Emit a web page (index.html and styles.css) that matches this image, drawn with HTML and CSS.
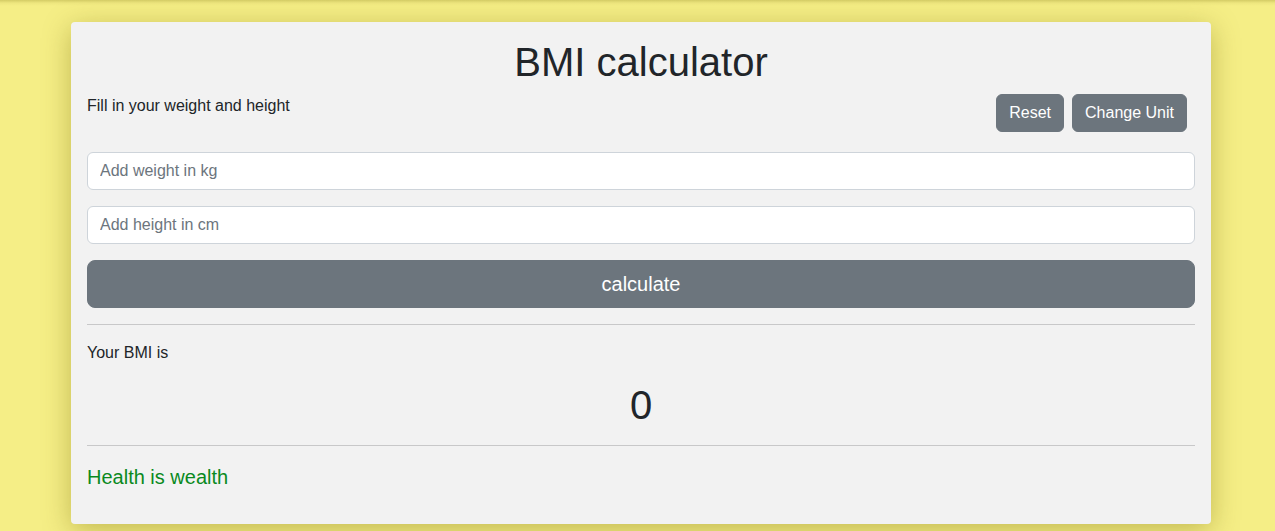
FILE: index.html
```html
<!DOCTYPE html>
<html lang="en">
<head>
<meta charset="utf-8">
<title>BMI calculator</title>
<link rel="stylesheet" href="styles.css">
</head>
<body>
<div class="topshade"></div>
<main class="card">
  <h1 class="title">BMI calculator</h1>
  <div class="toprow">
    <p class="hint">Fill in your weight and height</p>
    <div class="actions">
      <button class="btn">Reset</button>
      <button class="btn">Change Unit</button>
    </div>
  </div>
  <input class="field" type="text" placeholder="Add weight in kg">
  <input class="field" type="text" placeholder="Add height in cm">
  <button class="btn btn-lg">calculate</button>
  <hr class="rule">
  <p class="label">Your BMI is</p>
  <h1 class="value">0</h1>
  <hr class="rule">
  <p class="motto">Health is wealth</p>
</main>
</body>
</html>
```

FILE: styles.css
```css
* { box-sizing: border-box; }
html, body { margin: 0; padding: 0; }
body {
  background: #f5ee86;
  font-family: "Liberation Sans", Arial, sans-serif;
  color: #212529;
  font-size: 16px;
  line-height: 1.5;
  min-height: 531px;
  overflow: hidden;
}
.topshade {
  height: 22px;
  background: linear-gradient(to bottom, rgba(150,140,40,0.35) 0px, rgba(150,140,40,0.08) 3px, rgba(150,140,40,0) 6px);
}
.card {
  width: 1140px;
  margin-left: calc(50% - 566.5px);
  background: #f2f2f2;
  border-radius: 4px;
  padding: 16px;
  box-shadow: 0 6px 28px rgba(130, 120, 20, 0.45);
  display: flex;
  flex-direction: column;
}
.title {
  margin: 0 0 8px;
  font-size: 40px;
  font-weight: 400;
  line-height: 1.2;
  text-align: center;
}
.toprow {
  display: flex;
  justify-content: space-between;
  align-items: flex-start;
  margin-bottom: 20px;
}
.hint { margin: 0; }
.actions {
  display: flex;
  gap: 8px;
  margin-right: 8px;
}
.btn {
  font-family: inherit;
  font-size: 16px;
  line-height: 24px;
  padding: 6px 12px;
  color: #fff;
  background: #6c757d;
  border: 1px solid #6c757d;
  border-radius: 6px;
}
.btn-lg {
  width: 100%;
  font-size: 20px;
  line-height: 30px;
  padding: 8px 16px;
  border-radius: 8px;
}
.field {
  display: block;
  width: 100%;
  font-family: inherit;
  font-size: 16px;
  line-height: 24px;
  padding: 6px 12px;
  color: #212529;
  background: #fff;
  border: 1px solid #ced4da;
  border-radius: 6px;
  margin-bottom: 16px;
}
.field::placeholder { color: #6c757d; opacity: 1; }
.rule {
  margin: 16px 0;
  border: 0;
  border-top: 1px solid #212529;
  opacity: 0.2;
  width: 100%;
}
.label { margin: 0 0 16px; }
.value {
  margin: 0;
  font-size: 40px;
  font-weight: 400;
  line-height: 1.2;
  text-align: center;
}
.motto {
  margin: 0 0 16px;
  font-size: 20px;
  line-height: 30px;
  color: #0a8a1e;
}
```
